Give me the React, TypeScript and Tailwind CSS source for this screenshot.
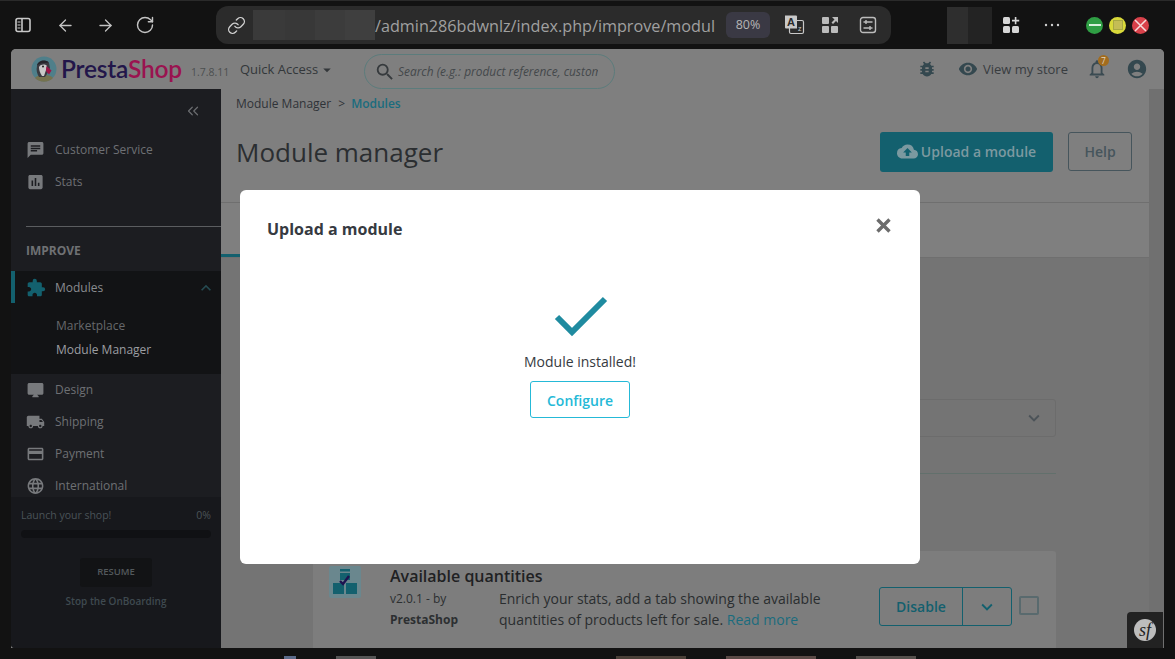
import React from "react";
import { ArrowLeft, ArrowRight, RotateCw, Link, ChevronsLeft } from "lucide-react";
import {
  MdChat, MdAssessment, MdExtension, MdDesktopMac, MdLocalShipping, MdPayment, MdLanguage,
  MdBugReport, MdVisibility, MdNotificationsNone, MdAccountCircle, MdSearch, MdCloudUpload,
  MdKeyboardArrowDown, MdKeyboardArrowUp, MdArrowDropDown,
} from "react-icons/md";

const font = "font-['Open_Sans',sans-serif]";

function Toolbar() {
  return (
    <div className="h-[49px] shrink-0 flex items-center relative border-t border-[#2a2a2a] text-[#c4c4c4]">
      <div className="w-[216px] flex items-center pl-[14px] shrink-0">
        <svg width="18" height="18" viewBox="0 0 18 18" fill="none" stroke="#c8c8c8" strokeWidth="1.6">
          <rect x="2" y="2.5" width="14" height="13" rx="2" />
          <path d="M8 2.5v13" />
          <path d="M3.5 6h3M3.5 9h3M3.5 12h3" strokeWidth="1.2" />
        </svg>
        <ArrowLeft size={19} strokeWidth={1.6} className="ml-[24px]" />
        <ArrowRight size={19} strokeWidth={1.6} className="ml-[21px]" />
        <RotateCw size={20} strokeWidth={1.7} className="ml-[20px]" />
      </div>
      <div className="w-[675px] h-[38px] rounded-[12px] bg-[#2b2b2b] flex items-center shrink-0 relative overflow-hidden">
        <Link size={19} strokeWidth={1.7} className="ml-[11px] mr-[1px] text-[#cfcfcf] shrink-0" />
        <div className="ml-[6px] w-[122px] h-[30px] shrink-0 flex">
          <div className="w-[32px] bg-[#3a3a3a]" />
          <div className="w-[30px] bg-[#383838]" />
          <div className="w-[30px] bg-[#3c3c3c]" />
          <div className="w-[30px] bg-[#3f3f3f]" />
        </div>
        <div className={`${font} w-[341px] mr-[10px] pt-[2px] shrink-0 text-[16.200px] text-[#a0a0a0] whitespace-nowrap overflow-hidden`}>
          /admin286bdwnlz/index.php/improve/modul
        </div>
        <div className={`${font} w-[44px] h-[26px] shrink-0 rounded-[6px] bg-[#3a3944] flex items-center justify-center text-[12.5px] text-[#b5b5b5]`}>
          80%
        </div>
        <div className="ml-[13px] relative w-[22px] h-[22px] shrink-0">
          <svg width="22" height="22" viewBox="0 0 22 22">
            <rect x="6.5" y="6.5" width="14" height="13" rx="1.5" fill="#2b2b2b" stroke="#c9c9c9" strokeWidth="1.2" />
            <path d="M2 1.5h11a1 1 0 0 1 1 1v12H3a1 1 0 0 1-1-1z" fill="#c9c9c9" />
            <text x="4" y="12" fontSize="11" fontWeight="700" fontFamily="Liberation Sans, sans-serif" fill="#2b2b2b">A</text>
            <text x="15" y="17" fontSize="7" fontFamily="Liberation Sans, sans-serif" fill="#c9c9c9">z</text>
          </svg>
        </div>
        <svg className="ml-[16px] shrink-0" width="18" height="18" viewBox="0 0 18 18" fill="#bcbcbc">
          <rect x="1" y="1" width="7" height="7" rx="1" />
          <rect x="1" y="10" width="7" height="7" rx="1" />
          <rect x="10" y="10" width="7" height="7" rx="1" />
          <path d="M11 1h6v6l-2-2-3 3-1.500-1.500 3-3z" />
        </svg>
        <svg className="ml-[20px] shrink-0" width="18" height="18" viewBox="0 0 18 18" fill="none" stroke="#bcbcbc" strokeWidth="1.4">
          <rect x="1.500" y="1.500" width="15" height="15" rx="2.500" />
          <path d="M4.500 6h9M4.500 12h9" />
          <path d="M7 4v4M11 10v4" />
        </svg>
      </div>
      <div className="ml-[56px] w-[45px] h-[37px] flex shrink-0">
        <div className="w-[21px] bg-[#2e2e2e]" />
        <div className="w-[24px] bg-[#232323]" />
      </div>
      <svg className="ml-[10px] shrink-0" width="18" height="18" viewBox="0 0 18 18" fill="#d6d6d6">
        <rect x="1" y="1" width="7" height="7" rx="1.500" />
        <rect x="1" y="10" width="7" height="7" rx="1.500" />
        <rect x="10" y="10" width="7" height="7" rx="1.500" />
        <path d="M12.800 1h1.600v2.800h2.800v1.600h-2.800v2.800h-1.600V5.400H10V3.800h2.800z" />
      </svg>
      <svg className="ml-[24px] shrink-0" width="16" height="4" viewBox="0 0 16 4" fill="#cfcfcf">
        <circle cx="2" cy="2" r="1.200" />
        <circle cx="8" cy="2" r="1.200" />
        <circle cx="14" cy="2" r="1.200" />
      </svg>
      <div className="ml-[26px] flex items-center gap-[6px] shrink-0">
        <div className="w-[17px] h-[17px] rounded-full bg-[#2f9e44] flex items-center justify-center">
          <div className="w-[12px] h-[1.500px] bg-[#d8f0dc]" />
        </div>
        <div className="w-[17px] h-[17px] rounded-full bg-[#d9d93a] flex items-center justify-center">
          <div className="w-[10px] h-[10px] bg-[#c4bd55] border border-[#a8a843]" />
        </div>
        <div className="w-[17px] h-[17px] rounded-full bg-[#d8414a] flex items-center justify-center">
          <svg width="13" height="13" viewBox="0 0 13 13" stroke="#f6dcdc" strokeWidth="1.500">
            <path d="M1 1l11 11M12 1L1 12" />
          </svg>
        </div>
      </div>
    </div>
  );
}

function PuffinLogo() {
  return (
    <svg width="26" height="26" viewBox="0 0 26 26" className="shrink-0">
      <circle cx="13" cy="13" r="12.500" fill="#4f7f8a" />
      <path d="M4 22c1.500-2 4-3 9-3s7.500 1 9 3a12.500 12.500 0 0 1-18 0z" fill="#75724f" />
      <path d="M6 10c1-5 9-7 12-3l1 5-3 6-2 3H8c-2-3-3-7-2-11z" fill="#3a3a40" />
      <path d="M8 11c2-3 6-3 8-1l-1 4-2 6h-2c-2-3-3-6-3-9z" fill="#c9c9c9" />
      <path d="M6 9.500c1-5 8-6.500 12-3L13 7c-3 0-5 1-7 2.500z" fill="#26252b" />
      <circle cx="12" cy="10.500" r="1" fill="#222" />
      <path d="M15.500 10l5 4.500-2.500 4-3-3.500z" fill="#9e1547" />
    </svg>
  );
}

function NavItem({ icon, label }: { icon: React.ReactNode; label: string }) {
  return (
    <div className="h-[32px] flex items-center pl-[15px] text-[#6e7074] text-[12px]">
      <span className="w-[19px] flex justify-center text-[#77797c] text-[20px] shrink-0">{icon}</span>
      <span className="ml-[10px]">{label}</span>
    </div>
  );
}

function Sidebar() {
  return (
    <div className="w-[210px] shrink-0 bg-[#1c1d21] flex flex-col overflow-hidden rounded-bl-[4px]">
      <div className="h-[45px] shrink-0 flex justify-end items-center pr-[19px] pb-[2px] text-[#6b6d70]">
        <ChevronsLeft size={18} strokeWidth={1.6} />
      </div>
      <div>
        <NavItem icon={<MdChat />} label="Customer Service" />
        <NavItem icon={<MdAssessment />} label="Stats" />
      </div>
      <div className="mt-[28px] ml-[15px] h-px bg-[#5b5d60] shrink-0" />
      <div className="h-[44px] shrink-0 pl-[15px] pt-[15px] text-[12px] leading-[18px] font-bold text-[#6f7174]">IMPROVE</div>
      <div className="bg-[#121315] h-[103px] shrink-0">
        <div className="h-[32px] flex items-center border-l-[4px] border-[#13606e] pl-[11px] pt-[1px] relative text-[12px] text-[#8a8c90]">
          <MdExtension className="text-[20px] text-[#13606e] shrink-0" />
          <span className="ml-[9px]">Modules</span>
          <MdKeyboardArrowUp className="ml-auto mr-[5px] text-[#264b52] text-[20px]" />
        </div>
        <div className="mt-[11px] pl-[45px] text-[12px] text-[#66686b] h-[24px] flex items-center">Marketplace</div>
        <div className="pl-[45px] text-[12px] text-[#9c9ea2] h-[24px] flex items-center">Module Manager</div>
      </div>
      <div className="h-[123px] shrink-0">
        <NavItem icon={<MdDesktopMac />} label="Design" />
        <NavItem icon={<MdLocalShipping />} label="Shipping" />
        <NavItem icon={<MdPayment />} label="Payment" />
        <NavItem icon={<MdLanguage />} label="International" />
      </div>
      <div className="flex-1 bg-[#17181c] px-[10px] pt-[11px] flex flex-col">
        <div className="flex justify-between text-[10.500px] text-[#4a5358] leading-[14px]">
          <span>Launch your shop!</span>
          <span>0%</span>
        </div>
        <div className="mt-[8px] h-[8px] rounded-full bg-[#101114]" />
        <div className="mt-[20px] mx-auto w-[72px] h-[29px] rounded-[3px] bg-[#121315] flex items-center justify-center text-[9.500px] font-semibold text-[#53595c]">
          RESUME
        </div>
        <div className="mt-[7px] text-center text-[10px] font-semibold text-[#3f4a50]">Stop the OnBoarding</div>
      </div>
    </div>
  );
}

function TopBar() {
  return (
    <div className="h-[40px] shrink-0 bg-[#7f7f7f] flex items-center pl-[20px] pr-[16px] relative">
      <PuffinLogo />
      <div className="ml-[4px] font-['Lato',sans-serif] font-semibold text-[24.500px] tracking-[-0.2px] leading-none w-[120px] whitespace-nowrap">
        <span className="text-[#22164a]">Presta</span>
        <span className="text-[#9a1350]">Shop</span>
      </div>
      <div className="ml-[10px] text-[10.500px] text-[#4c4f50] w-[39px] pt-[7px]">1.7.8.11</div>
      <div className="ml-[10px] pt-[2px] flex items-center text-[13px] text-[#33373a] w-[124px]">
        Quick Access
        <MdArrowDropDown className="text-[18px] text-[#33373a]" />
      </div>
      <div className="w-[251px] h-[35px] mt-[5px] rounded-full border border-[#5c7c7c] flex items-center pl-[9px] pr-[16px] shrink-0">
        <MdSearch className="text-[22px] text-[#363a3d] shrink-0" />
        <span className="ml-[2px] text-[11.900px] italic text-[#44484b] whitespace-nowrap overflow-hidden">
          Search (e.g.: product reference, custom
        </span>
      </div>
      <div className="ml-auto flex items-center text-[#34484f]">
        <MdBugReport className="text-[20px]" />
        <MdVisibility className="ml-[21px] text-[20px]" />
        <span className="ml-[5px] pt-[1px] text-[13px] text-[#383c3f]">View my store</span>
        <div className="ml-[18px] relative w-[22px] h-[22px]">
          <MdNotificationsNone className="text-[22px] text-[#3b4b52]" />
          <div className="absolute -top-[3px] left-[12px] w-[11px] h-[11px] rounded-full bg-[#a26c1e] text-[8.500px] leading-[11px] text-center text-[#e0d6c2]">7</div>
        </div>
        <MdAccountCircle className="ml-[18px] text-[22px]" />
      </div>
    </div>
  );
}

function Main() {
  return (
    <div className="flex-1 flex min-w-0 bg-[#747474]">
      <div className="flex-1 flex flex-col min-w-0">
        <div className="h-[169px] shrink-0 bg-[#7f7f7f] border-b border-[#6f6f6f] relative">
          <div className="px-[15px] pt-[6px] flex items-center text-[12px] text-[#2f3338] leading-[18px]">
            <span>Module Manager</span>
            <span className="ml-[7px]">&gt;</span>
            <span className="ml-[6px] font-semibold text-[#1a6c7e]">Modules</span>
          </div>
          <div className="mt-[19px] pl-[15px] pr-[17px] flex items-start">
            <div className="text-[26px] leading-[36px] pt-[2px] text-[#2b2e31]">Module manager</div>
            <div className="ml-auto w-[173px] h-[40px] pb-[1px] rounded-[3px] bg-[#13606e] flex items-center justify-center text-[14px] font-semibold text-[#7c99a0]">
              <MdCloudUpload className="text-[21px] mr-[3px]" />
              Upload a module
            </div>
            <div className="ml-[15px] w-[64px] h-[39px] rounded-[3px] border border-[#46555c] flex items-center justify-center text-[14px] font-semibold text-[#46555c]">
              Help
            </div>
          </div>
          <div className="mt-[30px] h-px bg-[#6f6f6f]" />
          <div className="absolute bottom-0 left-0 w-[60px] h-[3px] bg-[#13606e]" />
        </div>
        <div className="flex-1 pl-[92px] pr-[93px] pt-[141px] flex flex-col overflow-hidden">
          <div className="h-[38px] shrink-0 rounded-[3px] border border-[#6c6c6c] flex items-center justify-end pr-[10px]">
            <MdKeyboardArrowDown className="text-[22px] text-[#4c5358]" />
          </div>
          <div className="mt-[36px] h-px bg-[#62706c] shrink-0" />
          <div className="mt-[77px] flex-1 rounded-t-[3px] bg-[#7d7d7d] pl-[16px] pr-[17px] pt-[15px] flex items-start">
            <svg width="32" height="32" viewBox="0 0 32 32" className="shrink-0">
              <rect width="32" height="32" rx="2" fill="#6a878e" />
              <rect x="11" y="3" width="10" height="2.500" fill="#13606e" />
              <rect x="11" y="7" width="10" height="7" fill="#13606e" />
              <rect x="4" y="17" width="11" height="11" fill="#13606e" />
              <rect x="17" y="17" width="11" height="11" fill="#13606e" />
              <path d="M11 15l3 3 6-8" fill="none" stroke="#1e1250" strokeWidth="2.400" />
            </svg>
            <div className="ml-[29px] flex-1 min-w-0">
              <div className="text-[16px] font-semibold leading-[20px] text-[#1f2123]">Available quantities</div>
              <div className="flex mt-[1.500px]">
                <div className="w-[109px] shrink-0 text-[12px] leading-[21px] text-[#2c2f31]">
                  <div>v2.0.1 - by</div>
                  <div className="font-bold">PrestaShop</div>
                </div>
                <div className="w-[340px] shrink-0 text-[14px] leading-[21px] text-[#2a2d2f]">
                  Enrich your stats, add a tab showing the available quantities of products left for sale.{" "}
                  <span className="text-[#1a6c7e]">Read more</span>
                </div>
              </div>
            </div>
            <div className="w-[133px] h-[39px] mt-[21px] shrink-0 rounded-[3px] border border-[#13606e] flex items-center">
              <div className="w-[83px] h-full border-r border-[#13606e] flex items-center justify-center text-[14px] font-semibold text-[#13606e]">Disable</div>
              <div className="flex-1 flex justify-center">
                <MdKeyboardArrowDown className="text-[22px] text-[#13606e]" />
              </div>
            </div>
            <div className="ml-[7px] mt-[30px] w-[20px] h-[19px] shrink-0 rounded-[2px] border-2 border-[#596a6e]" />
          </div>
        </div>
      </div>
      <div className="w-[15px] shrink-0 bg-[#707070]" />
    </div>
  );
}

function Modal() {
  return (
    <div className="absolute left-[240px] top-[190px] w-[680px] h-[374px] bg-white rounded-[6px] flex flex-col">
      <div className="flex items-start pl-[27px] pr-[29px] pt-[27px]">
        <div className="text-[16px] leading-[24px] font-bold text-[#363a41]">Upload a module</div>
        <svg className="ml-auto mt-[1px]" width="15" height="15" viewBox="0 0 15 15" stroke="#6c6c6c" strokeWidth="3.400">
          <path d="M1.500 1.500l12 12M13.500 1.500l-12 12" />
        </svg>
      </div>
      <div className="flex flex-col items-center mt-[55px]">
        <svg className="ml-[1px]" width="54" height="42" viewBox="0 0 54 42" fill="none" stroke="#1f8ba0" strokeWidth="6">
          <path d="M3 21l15 15L51 3" />
        </svg>
        <div className="mt-[13px] text-[14px] leading-[21px] text-[#363a41]">Module installed!</div>
        <div className="mt-[9px] w-[100px] h-[37px] pt-[1px] rounded-[3px] border border-[#25b9d7] flex items-center justify-center text-[14px] font-semibold text-[#25b9d7]">
          Configure
        </div>
      </div>
    </div>
  );
}

export default function App() {
  return (
    <div className={`${font} w-[1175px] h-[659px] bg-[#121212] relative overflow-hidden flex flex-col`}>
      <Toolbar />
      <div className="mx-[11px] h-[599px] shrink-0 rounded-t-[5px] overflow-hidden flex flex-col bg-[#7f7f7f]">
        <TopBar />
        <div className="flex-1 flex min-h-0">
          <Sidebar />
          <Main />
        </div>
      </div>
      <div className="flex-1 flex items-end pl-[284px] gap-[40px] overflow-hidden">
        <div className="w-[12px] h-[3px] bg-[#5b6b8a]" />
        <div className="w-[40px] h-[3px] bg-[#555]" />
        <div className="ml-[200px] w-[70px] h-[3px] bg-[#4a4038]" />
        <div className="w-[90px] h-[3px] bg-[#5a4a46]" />
        <div className="w-[60px] h-[3px] bg-[#55504c]" />
      </div>
      <Modal />
      <div className="absolute left-[1127px] top-[612px] w-[36px] h-[36px] bg-[#222222] rounded-tl-[4px] flex items-center justify-center">
        <div className="w-[22px] h-[22px] rounded-full bg-[#bdbdbd] flex items-center justify-center font-['Liberation_Serif',serif] italic text-[18px] leading-none text-[#222]">
          sf
        </div>
      </div>
    </div>
  );
}
